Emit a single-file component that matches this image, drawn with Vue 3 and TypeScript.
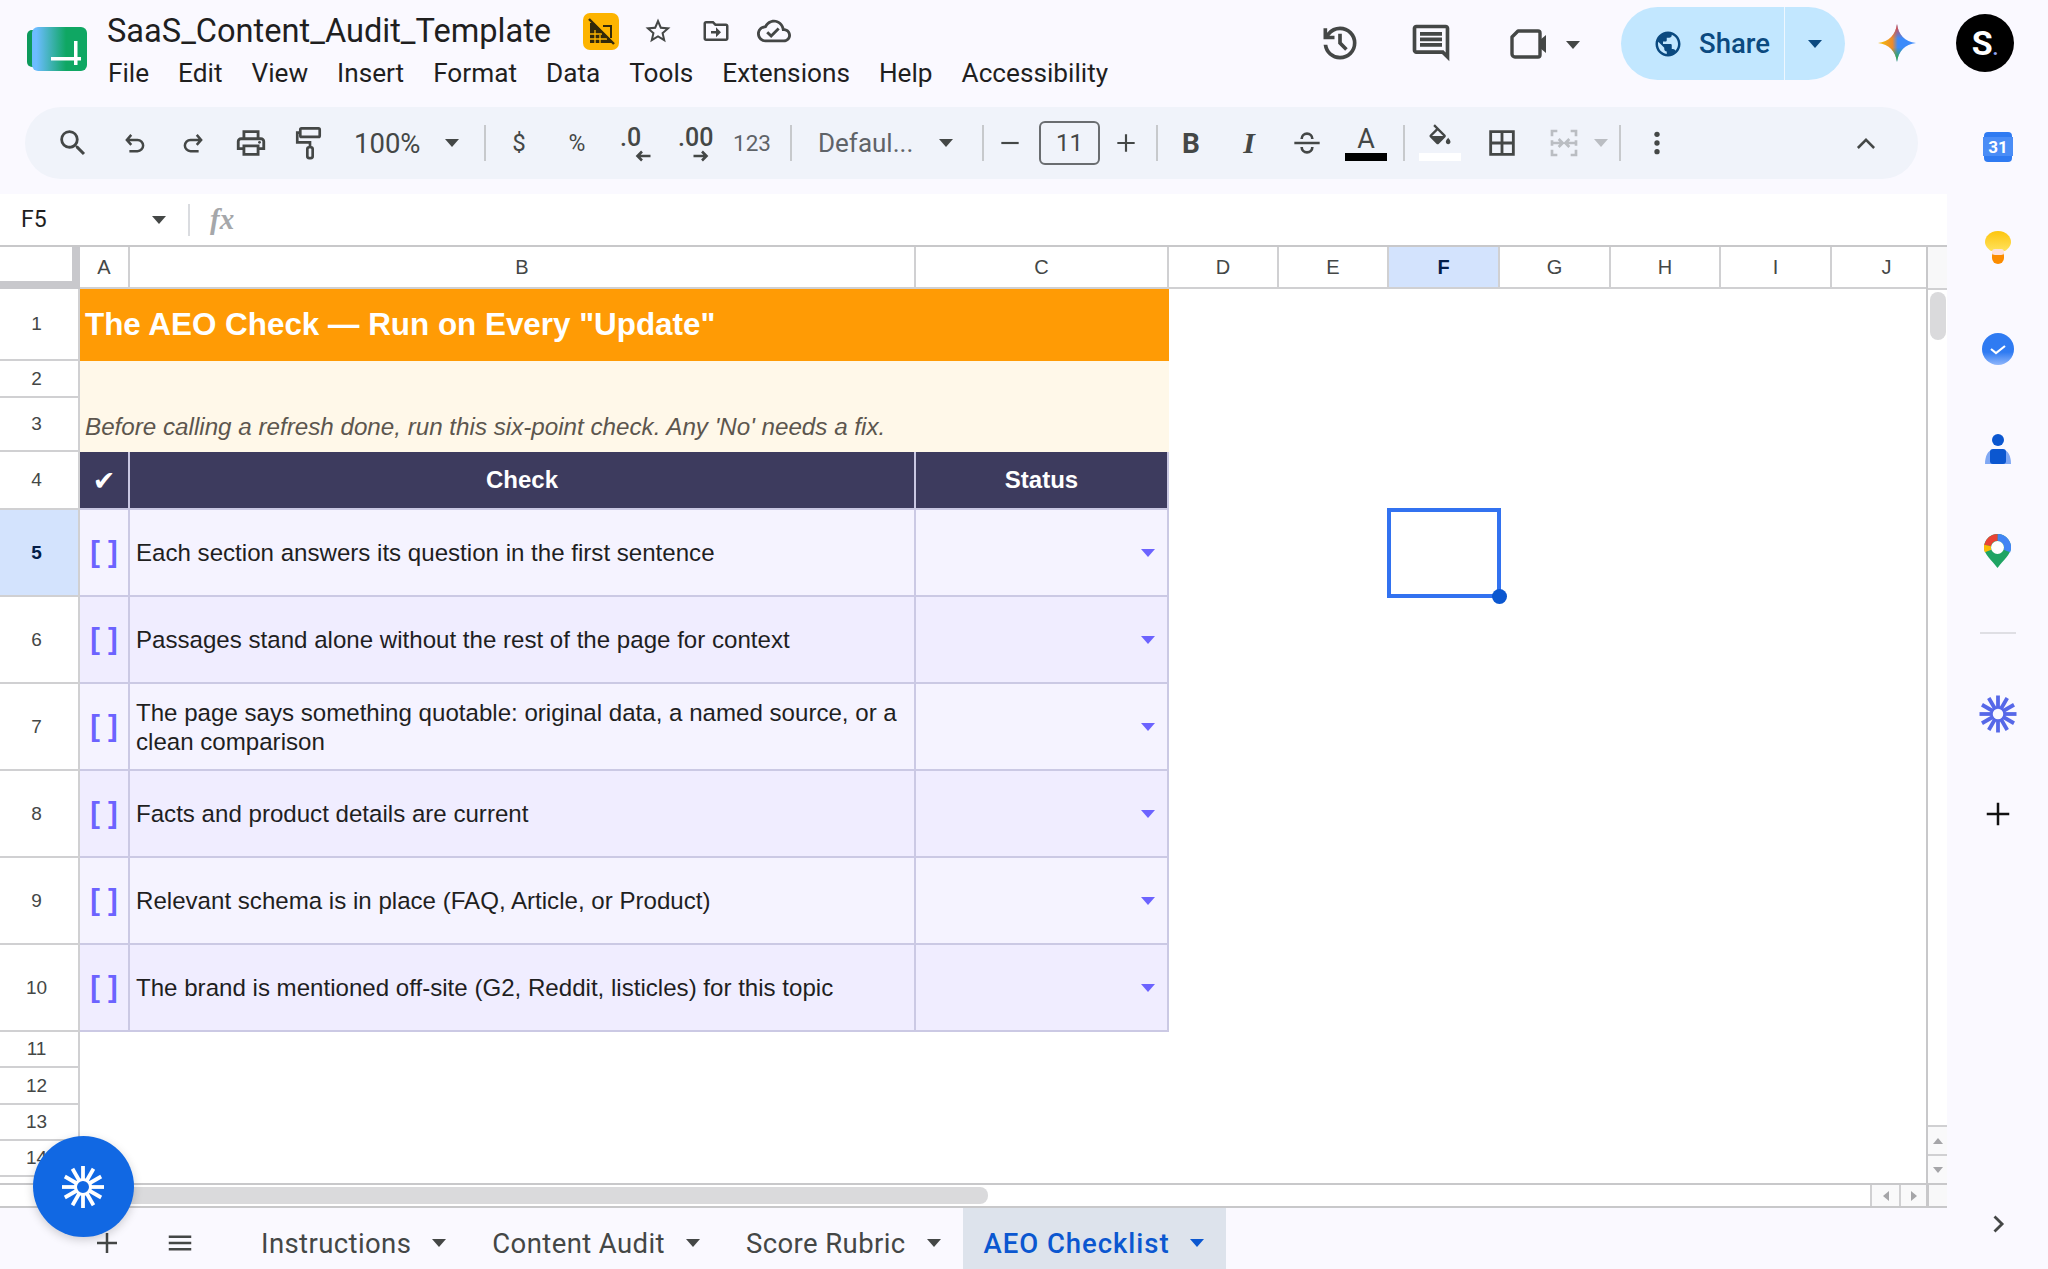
<script setup lang="ts">
const colWidths = [50, 786, 253, 110, 110, 111, 111, 110, 111, 94]
const columns = ['A', 'B', 'C', 'D', 'E', 'F', 'G', 'H', 'I', 'J']
const rowNumbers = [1, 2, 3, 4, 5, 6, 7, 8, 9, 10, 11, 12, 13, 14]

const checks = [
  'Each section answers its question in the first sentence',
  'Passages stand alone without the rest of the page for context',
  'The page says something quotable: original data, a named source, or a clean comparison',
  'Facts and product details are current',
  'Relevant schema is in place (FAQ, Article, or Product)',
  'The brand is mentioned off-site (G2, Reddit, listicles) for this topic',
]

const menus = ['File', 'Edit', 'View', 'Insert', 'Format', 'Data', 'Tools', 'Extensions', 'Help', 'Accessibility']
const tabs = ['Instructions', 'Content Audit', 'Score Rubric']

// spokes of the sunburst mark
const rays = Array.from({ length: 12 }, (_, i) => i * 30)
const gridColumns = `80px ${colWidths.map((w) => w + 'px').join(' ')}`
</script>

<template>
  <div class="page">
    <header class="top">
      <svg class="logo" width="60" height="44" viewBox="0 0 60 44">
        <defs>
          <linearGradient id="logoFill" x1="0" x2="1" y1="0" y2="0">
            <stop offset="0.08" stop-color="#6cbcff" />
            <stop offset="0.62" stop-color="#0fa763" />
          </linearGradient>
        </defs>
        <rect x="0" y="3" width="12" height="37" rx="5" fill="#0d9a5c" />
        <rect x="5" y="0" width="55" height="44" rx="6" fill="url(#logoFill)" />
        <rect x="24" y="30" width="30" height="3.5" fill="#fff" />
        <rect x="47" y="14" width="3.5" height="24" fill="#fff" />
      </svg>
      <div class="doc">
        <div class="title-row">
          <span class="title">SaaS_Content_Audit_Template</span>
          <span class="badge">
            <svg width="36" height="37" viewBox="0 0 36 37">
              <path d="M7 10h9l3 3h10v17H7z" fill="#33290a" />
              <path d="M7 6h25v25z" fill="#fdb400" />
              <path d="M20 13h8v12" fill="none" stroke="#33290a" stroke-width="2" />
              <path d="M12 17v13M17 22v8M7 21h12M7 26h17" stroke="#fdb400" stroke-width="1.300" />
              <path d="M6 6l25 25" stroke="#33290a" stroke-width="2.400" />
            </svg>
          </span>
          <svg class="ic star" width="30" height="30" viewBox="0 0 24 24" fill="#444746">
            <path d="M22 9.24l-7.19-.62L12 2 9.19 8.63 2 9.24l5.46 4.73L5.82 21 12 17.27 18.18 21l-1.63-7.03L22 9.24zM12 15.4l-3.76 2.27 1-4.28-3.32-2.88 4.38-.38L12 6.1l1.71 4.04 4.38.38-3.32 2.88 1 4.28L12 15.4z" />
          </svg>
          <svg class="ic folder" width="30" height="30" viewBox="0 0 24 24" fill="#444746">
            <path d="M20 6h-8l-2-2H4c-1.1 0-2 .9-2 2v12c0 1.1.9 2 2 2h16c1.1 0 2-.9 2-2V8c0-1.1-.9-2-2-2zm0 12H4V6h5.17l2 2H20v10zm-8-4H8v-2h4V9l4 4-4 4v-3z" />
          </svg>
          <svg class="ic cloud" width="34" height="34" viewBox="0 0 24 24" fill="#444746">
            <path d="M19.35 10.04C18.67 6.59 15.64 4 12 4 9.11 4 6.6 5.64 5.35 8.04 2.34 8.36 0 10.91 0 14c0 3.31 2.69 6 6 6h13c2.76 0 5-2.24 5-5 0-2.64-2.05-4.78-4.65-4.96zM19 18H6c-2.21 0-4-1.79-4-4 0-2.05 1.53-3.76 3.56-3.97l1.07-.11.5-.95C8.08 7.14 9.94 6 12 6c2.62 0 4.88 1.86 5.39 4.43l.3 1.5 1.53.11c1.56.1 2.78 1.41 2.78 2.96 0 1.65-1.35 3-3 3zm-9-3.82l-2.09-2.09L6.5 13.5 10 17l6.01-6.01-1.41-1.41z" />
          </svg>
        </div>
        <nav class="menu">
          <span v-for="m in menus" :key="m">{{ m }}</span>
        </nav>
      </div>
      <div class="actions">
        <svg class="act-history" width="44" height="44" viewBox="0 0 24 24" fill="#444746">
          <path d="M12 21q-3.45 0-6.012-2.287T3.05 13H5.1q.35 2.6 2.313 4.3T12 19q2.925 0 4.963-2.037T19 12q0-2.925-2.037-4.962T12 5q-1.725 0-3.225.8T6.25 8H9v2H3V4h2v2.35q1.275-1.6 3.113-2.475T12 3q3.75 0 6.375 2.625T21 12q0 3.75-2.625 6.375T12 21Zm2.8-4.8L11 12.4V7h2v4.6l3.2 3.2-1.4 1.4Z" />
        </svg>
        <svg class="act-comment" width="44" height="44" viewBox="0 0 24 24" fill="#444746">
          <path d="M21.99 4c0-1.1-.89-2-1.99-2H4c-1.1 0-2 .9-2 2v12c0 1.1.9 2 2 2h14l4 4-.01-18zM20 4v13.17L18.83 16H4V4h16zM6 12h12v2H6zm0-3h12v2H6zm0-3h12v2H6z" />
        </svg>
        <svg class="act-video" width="40" height="32" viewBox="0 0 40 32" fill="none" stroke="#444746" stroke-width="3.4">
          <path d="M9 3h20a2 2 0 0 1 2 2v22a2 2 0 0 1-2 2H6a3 3 0 0 1-3-3V9z" stroke-linejoin="round" />
          <path d="M31 12l6-5v18l-6-5z" fill="#444746" stroke="none" />
        </svg>
        <i class="caret act-caret"></i>
        <div class="share">
          <div class="share-main">
            <svg width="30" height="30" viewBox="0 0 24 24" fill="#0b4a80">
              <path d="M12 2C6.48 2 2 6.48 2 12s4.48 10 10 10 10-4.48 10-10S17.52 2 12 2zm-1 17.93c-3.95-.49-7-3.85-7-7.93 0-.62.08-1.21.21-1.79L9 15v1c0 1.1.9 2 2 2v1.93zm6.9-2.54c-.26-.81-1-1.39-1.9-1.39h-1v-3c0-.55-.45-1-1-1H8v-2h2c.55 0 1-.45 1-1V7h2c1.1 0 2-.9 2-2v-.41c2.93 1.19 5 4.06 5 7.41 0 2.08-.8 3.97-2.1 5.39z" />
            </svg>
            <span>Share</span>
          </div>
          <div class="share-drop"><i class="caret blue"></i></div>
        </div>
        <svg class="gemini" width="38" height="38" viewBox="0 0 24 24">
          <defs>
            <linearGradient id="gemBase" x1="0" x2="1" y1="0" y2="0">
              <stop offset="0.1" stop-color="#f2b60c" />
              <stop offset="0.38" stop-color="#ee8a2c" />
              <stop offset="0.52" stop-color="#3d8bfa" />
              <stop offset="1" stop-color="#3d8bfa" />
            </linearGradient>
            <linearGradient id="gemTop" x1="0" x2="0" y1="0" y2="1">
              <stop offset="0.05" stop-color="#ea4335" />
              <stop offset="0.38" stop-color="#ea4335" stop-opacity="0" />
              <stop offset="0.62" stop-color="#2fa84f" stop-opacity="0" />
              <stop offset="0.9" stop-color="#2fa84f" />
            </linearGradient>
          </defs>
          <path d="M12 0C12.8 6.5 17 11.2 24 12 17 12.8 12.8 17.5 12 24 11.200 17.5 7 12.8 0 12 7 11.200 11.200 6.5 12 0Z" fill="url(#gemBase)" />
          <path d="M12 0C12.8 6.5 17 11.2 24 12 17 12.8 12.8 17.5 12 24 11.200 17.5 7 12.8 0 12 7 11.200 11.200 6.5 12 0Z" fill="url(#gemTop)" />
        </svg>
        <div class="avatar">S<span class="dot">.</span></div>
      </div>
    </header>

    <div class="body">
      <main class="main">
        <div class="toolbar">
          <span class="tb"><svg width="34" height="34" viewBox="0 0 24 24" fill="#444746"><path d="M15.5 14h-.79l-.28-.27A6.471 6.471 0 0 0 16 9.5 6.5 6.5 0 1 0 9.5 16c1.61 0 3.09-.59 4.23-1.57l.27.28v.79l5 4.99L20.49 19l-4.99-5zm-6 0C7.01 14 5 11.99 5 9.5S7.01 5 9.5 5 14 7.01 14 9.5 11.99 14 9.5 14z" /></svg></span>
          <span class="tb m22"><svg width="30" height="30" viewBox="0 0 24 24" fill="none" stroke="#444746" stroke-width="2"><path d="M9 5.5L5.5 9.5 9 13.5M5.5 9.5H14a4.5 4.5 0 0 1 0 9H7.5" /></svg></span>
          <span class="tb m18"><svg width="30" height="30" viewBox="0 0 24 24" fill="none" stroke="#444746" stroke-width="2"><path d="M15 5.5l3.5 4-3.5 4M18.5 9.5H10a4.5 4.5 0 0 0 0 9h6.5" /></svg></span>
          <span class="tb m18"><svg width="34" height="34" viewBox="0 0 24 24" fill="#444746"><path d="M19 8h-1V3H6v5H5c-1.66 0-3 1.34-3 3v6h4v4h12v-4h4v-6c0-1.66-1.34-3-3-3zM8 5h8v3H8V5zm8 12v2H8v-4h8v2zm2-2v-2H6v2H4v-4c0-.55.45-1 1-1h14c.55 0 1 .45 1 1v4h-2z" /><circle cx="18" cy="11.5" r="1" /></svg></span>
          <span class="tb m19"><svg width="30" height="34" viewBox="0 0 24 28" fill="none" stroke="#444746" stroke-width="2.2"><rect x="4" y="2" width="16" height="7" rx="1" /><path d="M4 5.5H1.5v8H12v4" /><rect x="9.8" y="17.5" width="4.4" height="9" rx="1.5" /></svg></span>
          <span class="tb-text zoom m24">100%</span>
          <span class="tb-caret m21"><i class="caret"></i></span>
          <i class="sep m22"></i>
          <span class="tb tb-label m13">$</span>
          <span class="tb tb-label small m18">%</span>
          <span class="tb m12 dec one"><b>.0</b><svg width="16" height="12" viewBox="0 0 16 12" fill="none" stroke="#444746" stroke-width="2.6"><path d="M15.500 6H2M7 1.500L2.500 6 7 10.500" /></svg></span>
          <span class="tb m25 dec two"><b>.00</b><svg width="16" height="12" viewBox="0 0 16 12" fill="none" stroke="#444746" stroke-width="2.6"><path d="M.5 6H14M9 1.500L13.500 6 9 10.500" /></svg></span>
          <span class="tb tb-label num m18">123</span>
          <i class="sep m18"></i>
          <span class="tb-text font m26">Defaul...</span>
          <span class="tb-caret m21"><i class="caret"></i></span>
          <i class="sep m26"></i>
          <span class="tb m6"><svg width="26" height="26" viewBox="0 0 24 24" fill="#444746"><rect x="4" y="11" width="16" height="2" /></svg></span>
          <span class="size m9">11</span>
          <span class="tb m6"><svg width="26" height="26" viewBox="0 0 24 24" fill="#444746"><path d="M11 4h2v7h7v2h-7v7h-2v-7H4v-2h7z" /></svg></span>
          <i class="sep m10"></i>
          <span class="tb bold m13">B</span>
          <span class="tb ital m18">I</span>
          <span class="tb m18"><svg width="32" height="32" viewBox="0 0 24 24" fill="none" stroke="#444746" stroke-width="2"><path d="M8 9a4 4 0 0 1 8 0M2.5 12h19M8 15a4 4 0 0 0 8 0" /></svg></span>
          <span class="tb m19 color"><span class="letter">A</span><i class="swatch black"></i></span>
          <i class="sep m17"></i>
          <span class="tb m15 color"><svg class="fill-ic" width="28" height="30" viewBox="0 0 24 20" fill="#444746"><path d="M16.56 8.94L7.62 0 6.21 1.41l2.38 2.38-5.15 5.15c-.59.59-.59 1.54 0 2.12l5.5 5.5c.29.29.68.44 1.06.44s.77-.15 1.06-.44l5.5-5.5c.59-.58.59-1.53 0-2.12zM5.21 10L10 5.21 14.79 10H5.21zM19 11.5s-2 2.17-2 3.5c0 1.1.9 2 2 2s2-.9 2-2c0-1.33-2-3.5-2-3.5z" /></svg><i class="swatch white"></i></span>
          <span class="tb m22"><svg width="34" height="34" viewBox="0 0 24 24" fill="#444746"><path d="M3 3v18h18V3H3zm8 16H5v-6h6v6zm0-8H5V5h6v6zm8 8h-6v-6h6v6zm0-8h-6V5h6v6z" /></svg></span>
          <span class="tb m22"><svg width="32" height="32" viewBox="0 0 24 24" fill="none" stroke="#babdc2" stroke-width="2"><path d="M7 3H3v4M3 10v4M3 17v4h4M17 3h4v4M21 10v4M21 17v4h-4M4 12h6M8 9l3 3-3 3M20 12h-6M16 9l-3 3 3 3" /></svg></span>
          <span class="tb-caret m7"><i class="caret light"></i></span>
          <i class="sep m8"></i>
          <span class="tb m16"><svg width="32" height="32" viewBox="0 0 24 24" fill="#444746"><circle cx="12" cy="5.5" r="2" /><circle cx="12" cy="12" r="2" /><circle cx="12" cy="18.5" r="2" /></svg></span>
          <span class="tb push"><svg width="30" height="30" viewBox="0 0 24 24" fill="none" stroke="#444746" stroke-width="2"><path d="M5.5 16L12 9.5 18.5 16" /></svg></span>
        </div>

        <div class="formula">
          <span class="cell-ref">F5</span>
          <i class="caret"></i>
          <i class="sep formula-sep"></i>
          <span class="fx">fx</span>
        </div>

        <div class="sheet">
          <div class="grid" :style="{ gridTemplateColumns: gridColumns }">
            <div class="corner"></div>
            <div v-for="c in columns" :key="c" class="col-head" :class="{ on: c === 'F', clipped: c === 'J' }">{{ c }}</div>

            <div
              v-for="n in rowNumbers"
              :key="n"
              class="row-head"
              :class="{ on: n === 5 }"
              :style="{ gridRow: n + 1 }"
            >{{ n }}</div>
            <div class="row-head stub"></div>

            <div class="banner">The AEO Check — Run on Every "Update"</div>
            <div class="note">Before calling a refresh done, run this six-point check. Any 'No' needs a fix.</div>

            <div class="head-cell tick">✔</div>
            <div class="head-cell">Check</div>
            <div class="head-cell">Status</div>

            <template v-for="(text, i) in checks" :key="text">
              <div class="cell box" :class="{ alt: i % 2 }" :style="{ gridRow: i + 6, gridColumn: 2 }">[ ]</div>
              <div class="cell text" :class="{ alt: i % 2 }" :style="{ gridRow: i + 6, gridColumn: 3 }">{{ text }}</div>
              <div class="cell status" :class="{ alt: i % 2 }" :style="{ gridRow: i + 6, gridColumn: 4 }"><i class="drop"></i></div>
            </template>

            <div class="selection"><i class="handle"></i></div>
          </div>
          <div class="vbar">
            <div class="vbar-head"></div>
            <div class="vthumb"></div>
            <div class="vbtn first"><i class="tri up"></i></div>
            <div class="vbtn"><i class="tri down"></i></div>
          </div>
        </div>

        <div class="hbar">
          <div class="hthumb"></div>
          <div class="hbtn"><i class="tri left"></i></div>
          <div class="hbtn last"><i class="tri right"></i></div>
          <div class="hcorner"></div>
        </div>

        <div class="tabs">
          <svg class="tab-add" width="30" height="30" viewBox="0 0 24 24" fill="#444746"><path d="M11 4h2v7h7v2h-7v7h-2v-7H4v-2h7z" /></svg>
          <svg class="tab-all" width="30" height="30" viewBox="0 0 24 24" fill="#444746"><path d="M3 18h18v-2H3v2zm0-5h18v-2H3v2zm0-7v2h18V6H3z" /></svg>
          <div v-for="(t, i) in tabs" :key="t" class="tab" :class="{ first: i === 0 }">{{ t }}<i class="caret"></i></div>
          <div class="tab active">AEO Checklist<i class="caret blue-2"></i></div>
        </div>
      </main>

      <aside class="rail">
        <svg class="slot" width="30" height="30" viewBox="0 0 30 30">
          <rect x="1" y="0" width="28" height="30" rx="4" fill="#2f7bf2" />
          <rect x="0" y="5" width="30" height="19" fill="#4a8df6" />
          <text x="15" y="21" text-anchor="middle" class="cal">31</text>
        </svg>
        <svg class="slot" width="30" height="36" viewBox="0 0 30 36">
          <defs>
            <linearGradient id="bulb" x1="0" x2="0" y1="0" y2="1">
              <stop offset="0" stop-color="#fdc50e" />
              <stop offset="1" stop-color="#ffe25c" />
            </linearGradient>
          </defs>
          <path d="M15 1C6.5 1 2 7 2 12c0 4 3 7 6 9h14c3-2 6-5 6-9 0-5-4.500-11-13-11z" fill="url(#bulb)" />
          <rect x="9" y="20" width="12" height="14" rx="6" fill="#fb8c00" />
          <rect x="9" y="19" width="12" height="6" rx="3" fill="#fde3df" />
        </svg>
        <svg class="slot" width="34" height="32" viewBox="0 0 34 32">
          <defs>
            <linearGradient id="task" x1="0" x2="0" y1="0" y2="1">
              <stop offset="0.6" stop-color="#2f7bf2" />
              <stop offset="1" stop-color="#8fb6fb" />
            </linearGradient>
          </defs>
          <circle cx="17" cy="16" r="16" fill="url(#task)" />
          <path d="M10 16l5 4 9-7" fill="none" stroke="#fff" stroke-width="2.2" />
        </svg>
        <svg class="slot" width="26" height="32" viewBox="0 0 26 32">
          <circle cx="13" cy="6" r="6" fill="#0b57d0" />
          <path d="M0 30c0-8 3-14 8-14h10c5 0 8 6 8 14z" fill="#7fa8f4" />
          <rect x="5" y="15" width="16" height="15" rx="3" fill="#0b57d0" />
        </svg>
        <svg class="slot" width="27" height="34" viewBox="0 0 27 34">
          <path d="M13.500 0C6 0 0 6 0 13.500c0 7 8 13 13.500 20.500C19 26.500 27 20.500 27 13.500 27 6 21 0 13.500 0z" fill="#1fa463" />
          <path d="M13.500 3.500a10 10 0 0 1 9.400 13.500" fill="none" stroke="#4285f4" stroke-width="7" />
          <path d="M3.600 11.500a10 10 0 0 1 9.900-8" fill="none" stroke="#ea4335" stroke-width="7" />
          <path d="M4.100 17a10 10 0 0 1-.5-5.500" fill="none" stroke="#fbbc04" stroke-width="7" />
          <circle cx="13.500" cy="13.500" r="6.500" fill="#fff" />
        </svg>
        <i class="rail-sep"></i>
        <svg class="slot spark" width="38" height="38" viewBox="-19 -19 38 38">
          <path v-for="r in rays" :key="r" d="M0 -18.500V-6" stroke="#5668e8" stroke-width="3.800" :transform="`rotate(${r})`" />
          <circle r="6.500" fill="none" stroke="#5668e8" stroke-width="2.500" />
        </svg>
        <svg class="slot plus" width="30" height="30" viewBox="0 0 24 24" fill="#111"><path d="M11 3h2v8h8v2h-8v8h-2v-8H3v-2h8z" /></svg>
        <svg class="more" width="28" height="28" viewBox="0 0 24 24" fill="none" stroke="#444746" stroke-width="2.400"><path d="M9 5.500L15.500 12 9 18.500" /></svg>
      </aside>
    </div>

    <button class="fab">
      <svg width="44" height="44" viewBox="-22 -22 44 44">
        <path v-for="r in rays" :key="r" d="M0 -21V-7" stroke="#fff" stroke-width="3.800" :transform="`rotate(${r})`" />
        <circle r="7.500" fill="none" stroke="#fff" stroke-width="3" />
      </svg>
    </button>
  </div>
</template>

<style>
html,
body {
  margin: 0;
  background: #f9f9ff;
}
</style>

<style scoped>
.page {
  position: relative;
  width: 2048px;
  height: 1269px;
  overflow: hidden;
  background: #faf9ff;
  color: #1f1f1f;
  font-family: Roboto, "Liberation Sans", sans-serif;
}

.top {
  display: flex;
  height: 107px;
  padding-left: 27px;
  box-sizing: border-box;
}
.logo {
  margin-top: 27px;
  flex: none;
}
.doc {
  margin-left: 20px;
  padding-top: 10px;
}
.title-row {
  display: flex;
  align-items: center;
  height: 42px;
}
.title {
  font-size: 32.6px;
  line-height: 42px;
  width: 476px;
  white-space: nowrap;
}
.badge {
  width: 36px;
  height: 37px;
  border-radius: 7px;
  background: #fdb400;
  display: flex;
}
.star {
  margin-left: 24px;
}
.folder {
  margin-left: 28px;
}
.cloud {
  margin-left: 26px;
}
.menu {
  display: flex;
  gap: 29px;
  margin-top: 3px;
  padding-left: 1px;
  font-size: 26.2px;
  line-height: 36px;
}

.actions {
  margin-left: auto;
  display: flex;
  align-items: flex-start;
  padding-right: 34px;
}
.act-history {
  margin-top: 21px;
}
.act-comment {
  margin: 21px 0 0 47px;
}
.act-video {
  margin: 28px 0 0 56px;
}
.act-caret {
  margin: 41px 0 0 17px;
}
.share {
  display: flex;
  margin: 7px 0 0 41px;
  width: 224px;
  height: 73px;
  border-radius: 37px;
  overflow: hidden;
  background: #c2e7ff;
  color: #0b4a80;
}
.share-main {
  width: 164px;
  flex: none;
  display: flex;
  align-items: center;
  gap: 16px;
  padding-left: 32px;
  box-sizing: border-box;
  font-size: 27.5px;
  font-weight: 500;
  border-right: 1px solid #eef7ff;
}
.share-drop {
  flex: 1;
  display: flex;
  align-items: center;
  justify-content: center;
}
.gemini {
  margin: 24px 0 0 33px;
}
.avatar {
  margin: 14px 0 0 40px;
  width: 58px;
  height: 58px;
  border-radius: 50%;
  background: #000;
  color: #fff;
  font: 700 34px/58px Roboto, sans-serif;
  text-align: center;
}
.avatar .dot {
  color: #8ea2f2;
  font-size: 20px;
}

.body {
  display: flex;
  height: 1162px;
}
.main {
  width: 1947px;
  flex: none;
  display: flex;
  flex-direction: column;
}

.toolbar {
  display: flex;
  align-items: center;
  height: 72px;
  margin: 0 29px 15px 25px;
  padding: 0 32px 0 28px;
  border-radius: 36px;
  background: #f0f3fa;
  color: #444746;
  flex: none;
}
.tb {
  width: 40px;
  height: 44px;
  flex: none;
  display: flex;
  align-items: center;
  justify-content: center;
}
.tb-label {
  font-size: 24px;
}
.tb-label.small {
  font-size: 23px;
}
.tb-label.num {
  font-size: 22.5px;
  color: #5f6368;
}
.tb-text {
  flex: none;
  font-size: 26px;
  white-space: nowrap;
}
.zoom {
  width: 67px;
  font-size: 27.5px;
}
.font {
  width: 97px;
  color: #5f6368;
}
.tb-caret {
  width: 20px;
  flex: none;
  display: flex;
  justify-content: center;
}
.caret {
  display: inline-block;
  width: 0;
  height: 0;
  border-left: 7px solid transparent;
  border-right: 7px solid transparent;
  border-top: 8px solid #444746;
}
.caret.light {
  border-top-color: #babdc2;
}
.caret.blue {
  border-top-color: #0b4a80;
}
.caret.blue-2 {
  border-top-color: #0b57d0;
}
.sep {
  width: 2px;
  height: 36px;
  flex: none;
  background: #c7c9cc;
}
.dec {
  flex-direction: column;
  align-items: flex-start;
  justify-content: flex-start;
  height: 36px;
}
.dec.one {
  padding-left: 11px;
  box-sizing: border-box;
}
.dec.two {
  padding-left: 4px;
  box-sizing: border-box;
}
.dec b {
  font-weight: 500;
  font-size: 25px;
  line-height: 25px;
}
.dec svg {
  margin: 0 0 0 15px;
  flex: none;
}
.size {
  width: 61px;
  height: 44px;
  flex: none;
  box-sizing: border-box;
  border: 2px solid #6a6d70;
  border-radius: 6px;
  font-size: 24px;
  line-height: 40px;
  text-align: center;
}
.bold {
  font: 700 28px "Roboto", sans-serif;
}
.ital {
  font: italic 700 30px "Liberation Serif", serif;
}
.color {
  flex-direction: column;
  justify-content: flex-end;
  height: 36px;
}
.letter {
  font-size: 27px;
  line-height: 28px;
}
.swatch {
  display: block;
  width: 42px;
  height: 8px;
  flex: none;
}
.swatch.black {
  background: #000;
}
.swatch.white {
  background: #fff;
}
.fill-ic {
  flex: none;
  margin-top: -4px;
  margin-bottom: 2px;
}
.push {
  margin-left: auto;
}
.m6 { margin-left: 6px; }
.m7 { margin-left: 7px; }
.m8 { margin-left: 8px; }
.m9 { margin-left: 9px; }
.m10 { margin-left: 10px; }
.m12 { margin-left: 12px; }
.m13 { margin-left: 13px; }
.m15 { margin-left: 15px; }
.m16 { margin-left: 16px; }
.m17 { margin-left: 17px; }
.m18 { margin-left: 18px; }
.m19 { margin-left: 19px; }
.m21 { margin-left: 21px; }
.m22 { margin-left: 22px; }
.m24 { margin-left: 24px; }
.m25 { margin-left: 25px; }
.m26 { margin-left: 26px; }

.formula {
  height: 51px;
  flex: none;
  display: flex;
  align-items: center;
  background: #fff;
  padding-left: 21px;
}
.cell-ref {
  width: 131px;
  font-size: 23px;
}
.formula-sep {
  margin-left: 22px;
  height: 32px;
  background: #dadce0;
}
.fx {
  margin-left: 20px;
  font: italic 700 29px "Liberation Serif", serif;
  color: #a5a7aa;
}

.sheet {
  height: 938px;
  flex: none;
  display: flex;
  box-sizing: border-box;
  border-top: 2px solid #c8c8ca;
  background: #fff;
}
.grid {
  width: 1926px;
  flex: none;
  display: grid;
  grid-template-rows: 42px 72px 37px 54px 58px repeat(6, 87px) 36px 37px 36px 36px 6px;
  font-family: "Liberation Sans", Arial, sans-serif;
  color: #1f1f1f;
}
.corner {
  box-sizing: border-box;
  border-right: 8px solid #c8c8cc;
  border-bottom: 8px solid #c8c8cc;
}
.col-head {
  box-sizing: border-box;
  display: flex;
  align-items: center;
  justify-content: center;
  font-size: 20px;
  color: #444746;
  border-right: 2px solid #d0d0d2;
  border-bottom: 2px solid #d0d0d2;
}
.col-head.clipped {
  padding-left: 15px;
  border-right: 0;
}
.col-head.on {
  background: #d3e3fd;
  color: #041e49;
  font-weight: 700;
}
.row-head {
  grid-column: 1;
  box-sizing: border-box;
  display: flex;
  align-items: center;
  justify-content: center;
  padding-right: 5px;
  font-size: 19px;
  color: #444746;
  border-right: 2px solid #d0d0d2;
  border-bottom: 2px solid #d0d0d2;
}
.row-head.on {
  background: #d3e3fd;
  color: #041e49;
  font-weight: 700;
}
.row-head.stub {
  grid-row: 16;
  border-bottom: 0;
}
.banner {
  grid-column: 2 / 5;
  grid-row: 2;
  display: flex;
  align-items: center;
  padding-left: 5px;
  background: #ff9b05;
  color: #fff;
  font-size: 31.4px;
  font-weight: 700;
}
.note {
  grid-column: 2 / 5;
  grid-row: 3 / 5;
  display: flex;
  align-items: flex-end;
  padding: 0 0 11px 5px;
  background: #fff8e9;
  color: #5c564e;
  font-size: 24.2px;
  font-style: italic;
}
.head-cell {
  grid-row: 5;
  box-sizing: border-box;
  display: flex;
  align-items: center;
  justify-content: center;
  background: #3d3b5e;
  color: #fff;
  font-size: 24px;
  font-weight: 700;
  border-right: 2px solid #c9c7e2;
  border-bottom: 2px solid #c9c7e2;
}
.tick {
  font-family: "DejaVu Sans", sans-serif;
  font-size: 27px;
  font-weight: 400;
}
.cell {
  box-sizing: border-box;
  display: flex;
  align-items: center;
  background: #f5f3ff;
  font-size: 24.1px;
  line-height: 29px;
  border-right: 2px solid #cbc9e4;
  border-bottom: 2px solid #cbc9e4;
}
.cell.alt {
  background: #f0edff;
}
.box {
  justify-content: center;
  color: #6c63ff;
  font-size: 29px;
  font-weight: 700;
}
.text {
  padding: 0 6px;
}
.status {
  justify-content: flex-end;
  padding-right: 12px;
}
.drop {
  width: 0;
  height: 0;
  border-left: 7px solid transparent;
  border-right: 7px solid transparent;
  border-top: 8px solid #6c63ff;
}
.selection {
  grid-column: 7;
  grid-row: 6;
  margin: -2px -1px -1px -2px;
  border: 4px solid #3272f0;
  position: relative;
}
.handle {
  position: absolute;
  right: -10px;
  bottom: -10px;
  width: 15px;
  height: 15px;
  border-radius: 50%;
  background: #0b57d0;
}

.vbar {
  flex: 1;
  display: flex;
  flex-direction: column;
  border-left: 2px solid #c8c8ca;
}
.vbar-head {
  height: 41px;
  flex: none;
  background: #f8f8f9;
  border-bottom: 2px solid #d0d0d2;
}
.vthumb {
  width: 16px;
  height: 48px;
  margin: 2px 0 0 2px;
  border-radius: 8px;
  background: #dadadc;
}
.vbtn {
  height: 29px;
  flex: none;
  box-sizing: border-box;
  border-top: 2px solid #d0d0d2;
  background: #f9f9fa;
  display: flex;
  align-items: center;
  justify-content: center;
}
.vbtn.first {
  margin-top: auto;
}
.tri {
  width: 0;
  height: 0;
  border: 5px solid transparent;
}
.tri.up {
  border-top: 0;
  border-bottom: 6px solid #a5a5a8;
}
.tri.down {
  border-bottom: 0;
  border-top: 6px solid #a5a5a8;
}
.tri.left {
  border-left: 0;
  border-right: 6px solid #a5a5a8;
}
.tri.right {
  border-right: 0;
  border-left: 6px solid #a5a5a8;
}

.hbar {
  height: 25px;
  flex: none;
  box-sizing: border-box;
  display: flex;
  background: #fff;
  border-top: 2px solid #c8c8ca;
  border-bottom: 2px solid #c8c8ca;
}
.hthumb {
  width: 908px;
  margin: 2px 882px 2px 80px;
  border-radius: 0 8px 8px 0;
  background: #dadadc;
  flex: none;
}
.hbtn {
  width: 29px;
  flex: none;
  box-sizing: border-box;
  border-left: 2px solid #d0d0d2;
  background: #f9f9fa;
  display: flex;
  align-items: center;
  justify-content: center;
}
.hbtn.last {
  width: 27px;
}
.hcorner {
  flex: 1;
  background: #f8f8f9;
  border-left: 3px solid #c8c8ca;
}

.tabs {
  flex: 1;
  display: flex;
  align-items: stretch;
  color: #444746;
  font-size: 27.5px;
  letter-spacing: 0.4px;
}
.tab-add {
  margin: 20px 0 0 92px;
}
.tab-all {
  margin: 20px 0 0 43px;
}
.tab {
  display: flex;
  align-items: center;
  gap: 21px;
  margin-left: 46px;
  padding-top: 9px;
  white-space: nowrap;
}
.tab.first {
  margin-left: 66px;
}
.tab.active {
  margin-left: 22px;
  padding: 9px 22px 0 21px;
  gap: 20px;
  background: #dde3ec;
  color: #0b57d0;
  font-weight: 500;
  letter-spacing: 0.95px;
}

.rail {
  flex: 1;
  display: flex;
  flex-direction: column;
  align-items: center;
  padding-top: 15px;
}
.slot {
  height: 50px;
  margin-bottom: 51px;
  flex: none;
}
.cal {
  font: 700 17px Roboto, sans-serif;
  fill: #fff;
}
.rail-sep {
  display: block;
  width: 36px;
  height: 2px;
  background: #dfdfe4;
  margin: 5px 0 55px;
}
.spark {
  margin-bottom: 50px;
}
.plus {
  margin-bottom: 0;
}
.more {
  margin-top: auto;
  margin-bottom: 31px;
}

.fab {
  position: absolute;
  left: 33px;
  top: 1136px;
  width: 101px;
  height: 101px;
  padding: 0 2px 0 0;
  border: 0;
  border-radius: 50%;
  background: #1168e3;
  display: flex;
  align-items: center;
  justify-content: center;
  box-shadow: 0 3px 10px rgba(0, 0, 0, 0.18);
}
</style>
